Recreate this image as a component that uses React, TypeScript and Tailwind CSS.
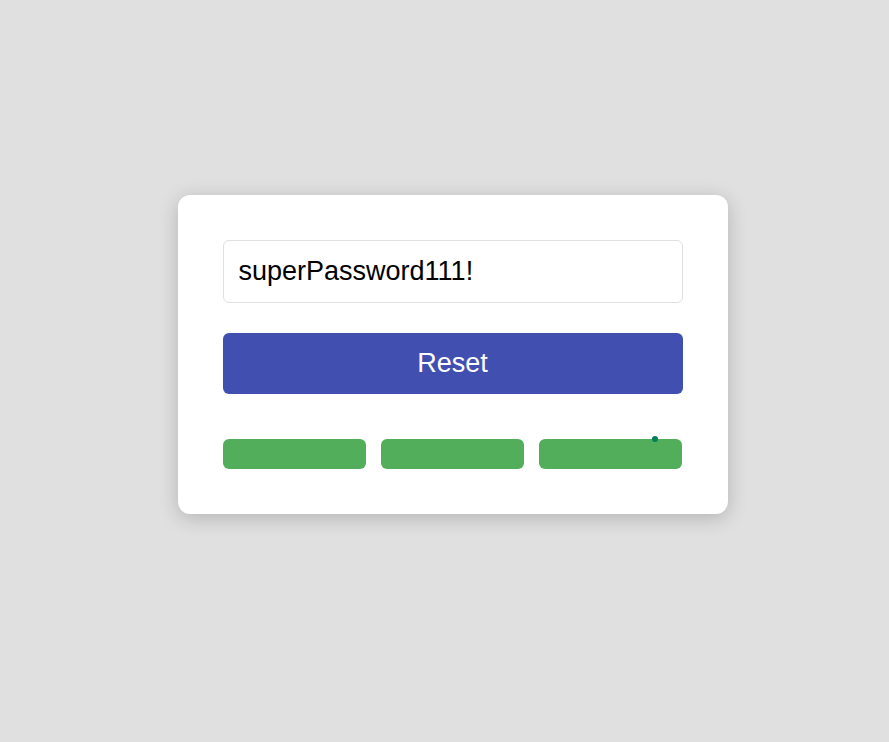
const BARS = [0, 1, 2];

export default function App() {
  return (
    <main className="h-[742px] w-[889px] overflow-hidden bg-[#e0e0e0] pt-[195px] pl-[178px] font-['Liberation_Sans',Arial,sans-serif]">
      <section className="flex h-[319px] w-[550px] flex-col rounded-[12px] bg-white p-[45px] shadow-[0_4px_20px_rgba(0,0,0,0.2)]">
        <input
          type="text"
          aria-label="Password"
          defaultValue="superPassword111!"
          className="block h-[63px] w-[460px] shrink-0 rounded-[6px] border border-[#e0e0e0] bg-white px-[14.5px] text-[27px] text-black outline-none"
        />
        <button
          type="button"
          className="mt-[30px] h-[61px] w-full shrink-0 rounded-[6px] bg-[#4150b0] pr-px pb-px text-[27px] text-white"
        >
          Reset
        </button>
        <div className="relative mt-[45px] flex gap-[15px]">
          {BARS.map((bar) => (
            <div key={bar} className="h-[30px] w-[143px] rounded-[6px] bg-[#52ae5b]" />
          ))}
          <span className="absolute top-[-3px] left-[429px] size-[6px] rounded-full bg-[#00805a]" />
        </div>
      </section>
    </main>
  );
}
